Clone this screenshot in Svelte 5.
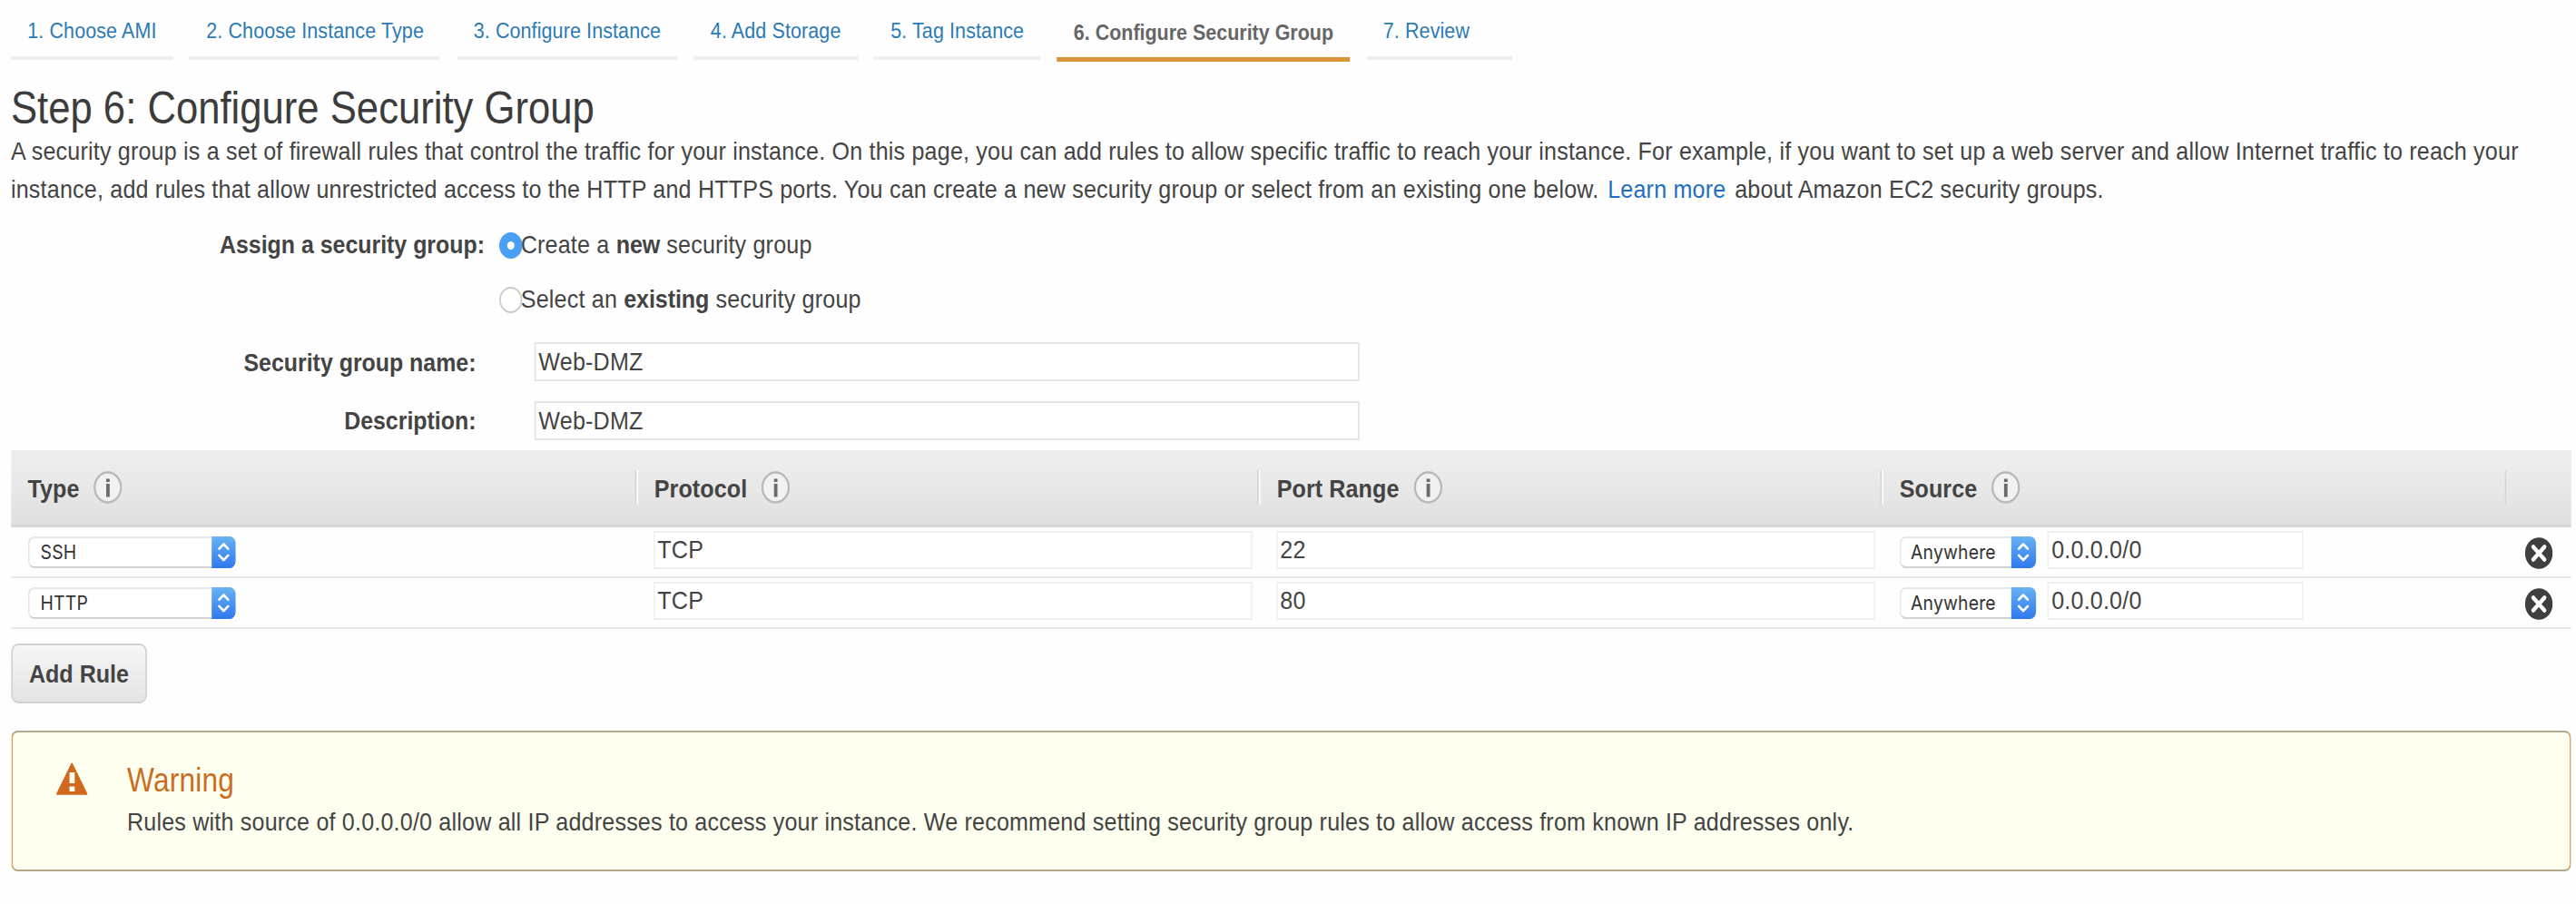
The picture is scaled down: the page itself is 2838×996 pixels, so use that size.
<script>
  const tabs = [
    '1. Choose AMI',
    '2. Choose Instance Type',
    '3. Configure Instance',
    '4. Add Storage',
    '5. Tag Instance',
    '6. Configure Security Group',
    '7. Review'
  ];
  const active = 5;
  const columns = ['Type', 'Protocol', 'Port Range', 'Source'];
  const rules = [
    { type: 'SSH', protocol: 'TCP', port: '22', source: 'Anywhere', cidr: '0.0.0.0/0' },
    { type: 'HTTP', protocol: 'TCP', port: '80', source: 'Anywhere', cidr: '0.0.0.0/0' }
  ];
</script>

{#snippet info()}
  <svg class="info" viewBox="0 0 36 36" width="36" height="36">
    <circle cx="18" cy="18" r="16.5" fill="#f1f1f1" stroke="#b8b8b8" stroke-width="2.500" />
    <rect x="16" y="8.500" width="4.300" height="3.600" fill="#6a6a6a" />
    <rect x="16" y="14" width="4.300" height="14.500" fill="#6a6a6a" />
  </svg>
{/snippet}

{#snippet select(value, kind)}
  <div class="select {kind}">
    <span class="value">{value}</span>
    <span class="stepper">
      <svg viewBox="0 0 30 34" width="30" height="34" fill="none" stroke="#fff" stroke-width="3" stroke-linecap="round" stroke-linejoin="round">
        <path d="M9.500 13.500 15 8.500l5.500 5M9.500 21 15 26l5.500-5" />
      </svg>
    </span>
  </div>
{/snippet}

<main class="page">
  <nav class="tabs">
    {#each tabs as tab, i}
      <div class="tab" class:active={i === active} class:last={i === tabs.length - 1}><span>{tab}</span></div>
    {/each}
  </nav>

  <h1>Step 6: Configure Security Group</h1>
  <p class="intro">
    <span>A security group is a set of firewall rules that control the traffic for your instance. On this page, you can add rules to allow specific traffic to reach your instance. For example, if you want to set up a web server and allow Internet traffic to reach your</span><br />
    <span>instance, add rules that allow unrestricted access to the HTTP and HTTPS ports. You can create a new security group or select from an existing one below. <a>Learn more</a> about Amazon EC2 security groups.</span>
  </p>

  <section class="form">
    <div class="choice">
      <div class="label">Assign a security group:</div>
      <svg class="radio" viewBox="0 0 29 29" width="29" height="29">
        <circle cx="14.5" cy="14.5" r="14.5" fill="#4a9ff2" />
        <circle cx="14.5" cy="14.5" r="4.500" fill="#fff" />
      </svg>
      <span class="text">Create a <b>new</b> security group</span>
    </div>
    <div class="choice">
      <div class="label"></div>
      <svg class="radio" viewBox="0 0 29 29" width="29" height="29">
        <circle cx="14.5" cy="14.5" r="13.500" fill="#fff" stroke="#cbcbcb" stroke-width="2" />
      </svg>
      <span class="text">Select an <b>existing</b> security group</span>
    </div>
    <div class="field name">
      <div class="label">Security group name:</div>
      <div class="input">Web-DMZ</div>
    </div>
    <div class="field">
      <div class="label">Description:</div>
      <div class="input">Web-DMZ</div>
    </div>
  </section>

  <section class="table">
    <div class="row head">
      {#each columns as column}
        <div class="cell"><span class="title">{column}</span>{@render info()}</div>
      {/each}
      <div class="cell end"></div>
    </div>
    {#each rules as rule}
      <div class="row">
        <div class="cell">{@render select(rule.type, 'wide')}</div>
        <div class="cell"><div class="input">{rule.protocol}</div></div>
        <div class="cell"><div class="input">{rule.port}</div></div>
        <div class="cell source">
          {@render select(rule.source, 'narrow')}
          <div class="input cidr">{rule.cidr}</div>
        </div>
        <div class="cell end">
          <svg class="remove" viewBox="0 0 35 35" width="35" height="35">
            <circle cx="17.5" cy="17.500" r="17.300" fill="#3f3f3f" />
            <path d="M10.500 10.500l14 14m0-14l-14 14" stroke="#fff" stroke-width="4.600" stroke-linecap="round" />
          </svg>
        </div>
      </div>
    {/each}
  </section>

  <div class="button">Add Rule</div>

  <section class="warning">
    <svg class="alert" viewBox="0 0 40 36" width="40" height="36">
      <path d="M20 1.500 38.500 34.800h-37z" fill="#d0691f" stroke="#d0691f" stroke-width="2" stroke-linejoin="round" />
      <path d="M17 11h6.500v12H17zM17 26.500h6.500v5.500H17z" fill="#fffff0" />
    </svg>
    <div>
      <h2>Warning</h2>
      <p>Rules with source of 0.0.0.0/0 allow all IP addresses to access your instance. We recommend setting security group rules to allow access from known IP addresses only.</p>
    </div>
  </section>
</main>

<style>
  :global(body) {
    margin: 0;
    background: #fefefe;
    overflow: hidden;
  }
  .page {
    box-sizing: border-box;
    width: 3225px;
    height: 996px;
    padding: 0 0 0 13.6px;
    transform: scaleX(0.88);
    transform-origin: 0 0;
    background: #fefefe;
    color: #444;
    font: 28.5px/42px "Liberation Sans", Arial, sans-serif;
    letter-spacing: 0.22px;
    white-space: nowrap;
  }
  svg { display: block; flex: none; }
  h1, h2, p { margin: 0; font-weight: 400; }
  b { letter-spacing: -0.1px; }
  .tabs {
    display: flex;
    gap: 20.6px;
    height: 68px;
    font-size: 24.4px;
    line-height: 28px;
    letter-spacing: 0.13px;
    color: #2b7ab5;
  }
  .tab {
    box-sizing: border-box;
    height: 66px;
    padding: 20px 20.8px 0;
    border-bottom: 4px solid #eee;
  }
  .tab.active {
    height: 68px;
    padding-top: 22px;
    border-bottom: 5px solid #d9943a;
    color: #666;
    font-weight: 700;
    letter-spacing: 0;
  }
  .tab.last { width: 183px; }
  h1 {
    margin-top: 26px;
    font-size: 49.600px;
    line-height: 51px;
    letter-spacing: 0;
    color: #3c3c3c;
  }
  .intro { margin-top: 0; }
  .intro a { color: #1f6fc0; margin: 0 3px; }
  .label {
    font-size: 28.3px;
    font-weight: 700;
    letter-spacing: 0;
    text-align: right;
    flex: none;
  }
  .form { margin-top: 9.5px; }
  .choice {
    display: flex;
    align-items: center;
    height: 60px;
  }
  .choice .label { width: 593.2px; margin-right: 18.2px; }
  .choice .text { margin-left: -2px; }
  .radio { position: relative; top: 1.5px; }
  .field {
    display: flex;
    align-items: center;
    height: 43px;
    margin-top: 21.5px;
  }
  .field.name { margin-top: 18.5px; }
  .field .label { width: 582.4px; margin-right: 73.3px; }
  .input {
    box-sizing: border-box;
    height: 42px;
    padding-left: 3px;
    border: 2px solid #f0f0f0;
    background: #fff;
    line-height: 37px;
  }
  .field .input {
    width: 1033px;
    height: 43px;
    border-color: #e4e4e4;
    line-height: 38px;
  }
  .table {
    width: 3205.7px;
    margin-top: 11.5px;
  }
  .row {
    box-sizing: border-box;
    display: grid;
    grid-template-columns: 785px 779.5px 779.5px 780.7px 1fr;
    height: 56px;
    border-bottom: 2px solid #e8e8e8;
  }
  .cell { padding: 4px 0 0 19.5px; }
  .cell:first-child { padding-left: 21px; }
  .cell .input { width: 750px; }
  .cell.source { display: flex; padding-left: 20.5px; }
  .cell .input.cidr { width: 320.5px; margin-left: 14.8px; }
  .cell.end { padding: 10.5px 0 0 23px; }
  .head {
    height: 85px;
    border-bottom: 3px solid #d6d6d6;
    background: linear-gradient(#eeeeee, #e8e8e8 50%, #dfdfdf);
    font-weight: 700;
    letter-spacing: 0.1px;
    align-items: center;
  }
  .head .cell {
    box-sizing: border-box;
    display: flex;
    align-items: center;
    height: 38px;
    padding: 0 0 0 20.5px;
    border-right: 2px solid #fbfbfb;
    box-shadow: inset -2px 0 #d4d4d4;
  }
  .head .cell:first-child { padding-left: 21px; }
  .head .cell:nth-child(4) { border-right: 0; }
  .head .cell.end { border: 0; box-shadow: none; }
  .title { padding-top: 1.5px; }
  .info { margin-left: 18px; }
  .select {
    box-sizing: border-box;
    display: flex;
    justify-content: space-between;
    height: 35px;
    margin-top: 6px;
    border: 2px solid #e6e6e6;
    border-bottom-color: #d2d2d2;
    border-right: 0;
    border-radius: 8px;
    background: #fff;
    color: #333;
    font: 22px/31px Inter, sans-serif;
  }
  .wide { width: 260.6px; padding-left: 14px; }
  .narrow { width: 170.5px; padding-left: 12px; }
  .stepper {
    width: 30.3px;
    height: 35px;
    margin: -2px 0;
    border-radius: 0 8px 8px 0;
    background: linear-gradient(#68b2f4, #3079ee);
  }
  .button {
    box-sizing: border-box;
    width: 170.5px;
    height: 66px;
    margin-top: 16px;
    border: 2px solid #d2d2d2;
    border-radius: 9px;
    background: linear-gradient(#f6f6f6, #e4e4e4);
    text-align: center;
    font-weight: 700;
    letter-spacing: 0;
    line-height: 63px;
  }
  .warning {
    box-sizing: border-box;
    display: flex;
    width: 3205.7px;
    height: 155px;
    margin-top: 30px;
    padding: 33px 0 0 54.5px;
    border: 2px solid;
    border-color: #b3a88c #dba562;
    border-radius: 8px;
    background: #fffff0;
  }
  .alert { margin-right: 49px; }
  .warning h2 {
    font-size: 36px;
    line-height: 40px;
    color: #cb6d1f;
  }
  .warning p { margin-top: 3.5px; }
</style>
